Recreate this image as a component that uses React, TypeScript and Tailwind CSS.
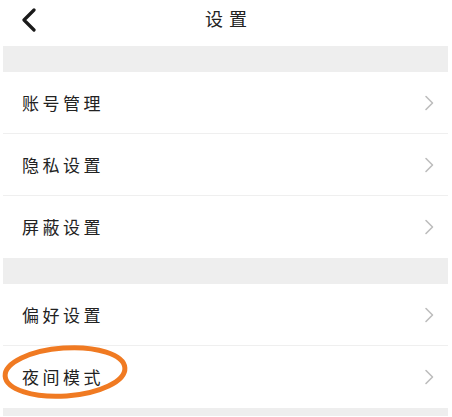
import React from 'react';

const font = { fontFamily: '"Noto Sans CJK SC", "Noto Sans", sans-serif' };

const groups = [
    ['账号管理', '隐私设置', '屏蔽设置'],
    ['偏好设置', '夜间模式'],
];

const Chevron: React.FC = () => (
    <svg width="10" height="16" viewBox="0 0 10 16" fill="none">
        <path d="M2 1.5 L8.5 8 L2 14.5" stroke="#bdbdbd" strokeWidth="1.6" strokeLinecap="round" strokeLinejoin="round" />
    </svg>
);

const Row: React.FC<{ label: string; last: boolean }> = ({ label, last }) => (
    <div className={`flex items-center justify-between h-[62px] pl-[19px] pr-[14px] bg-white ${last ? '' : 'border-b border-[#efefef]'}`}>
        <span className="text-[17px] tracking-[3.5px] text-[#222]">{label}</span>
        <Chevron />
    </div>
);

const App: React.FC = () => {
    return (
        <div className="relative w-[452px] h-[417px] bg-white overflow-hidden" style={font}>
            {/* Header */}
            <div className="relative flex items-center justify-center h-[46px]">
                <svg className="absolute left-[20px] top-[8px]" width="18" height="24" viewBox="0 0 18 24" fill="none">
                    <path d="M14 2 L4 12 L14 22" stroke="#1a1a1a" strokeWidth="3.2" strokeLinecap="round" strokeLinejoin="round" />
                </svg>
                <span className="text-[18px] tracking-[6px] text-[#222] -mt-[10px] pl-[6px]">设置</span>
            </div>

            <div className="mx-[3px] mr-[4px]">
                {groups.map((g, gi) => (
                    <div key={gi}>
                        <div className="h-[26px] bg-[#eeeeee]" />
                        {g.map((label, i) => (
                            <Row key={label} label={label} last={i === g.length - 1} />
                        ))}
                    </div>
                ))}
                <div className="h-[8px] bg-[#eeeeee]" />
            </div>

            {/* orange highlight circle */}
            <svg className="absolute left-[1px] top-[343px]" width="130" height="60" viewBox="0 0 130 60" fill="none">
                <ellipse cx="64" cy="29" rx="60" ry="24" stroke="#f07a22" strokeWidth="5" transform="rotate(-4 64 29)" />
            </svg>
        </div>
    );
};

export default App;
